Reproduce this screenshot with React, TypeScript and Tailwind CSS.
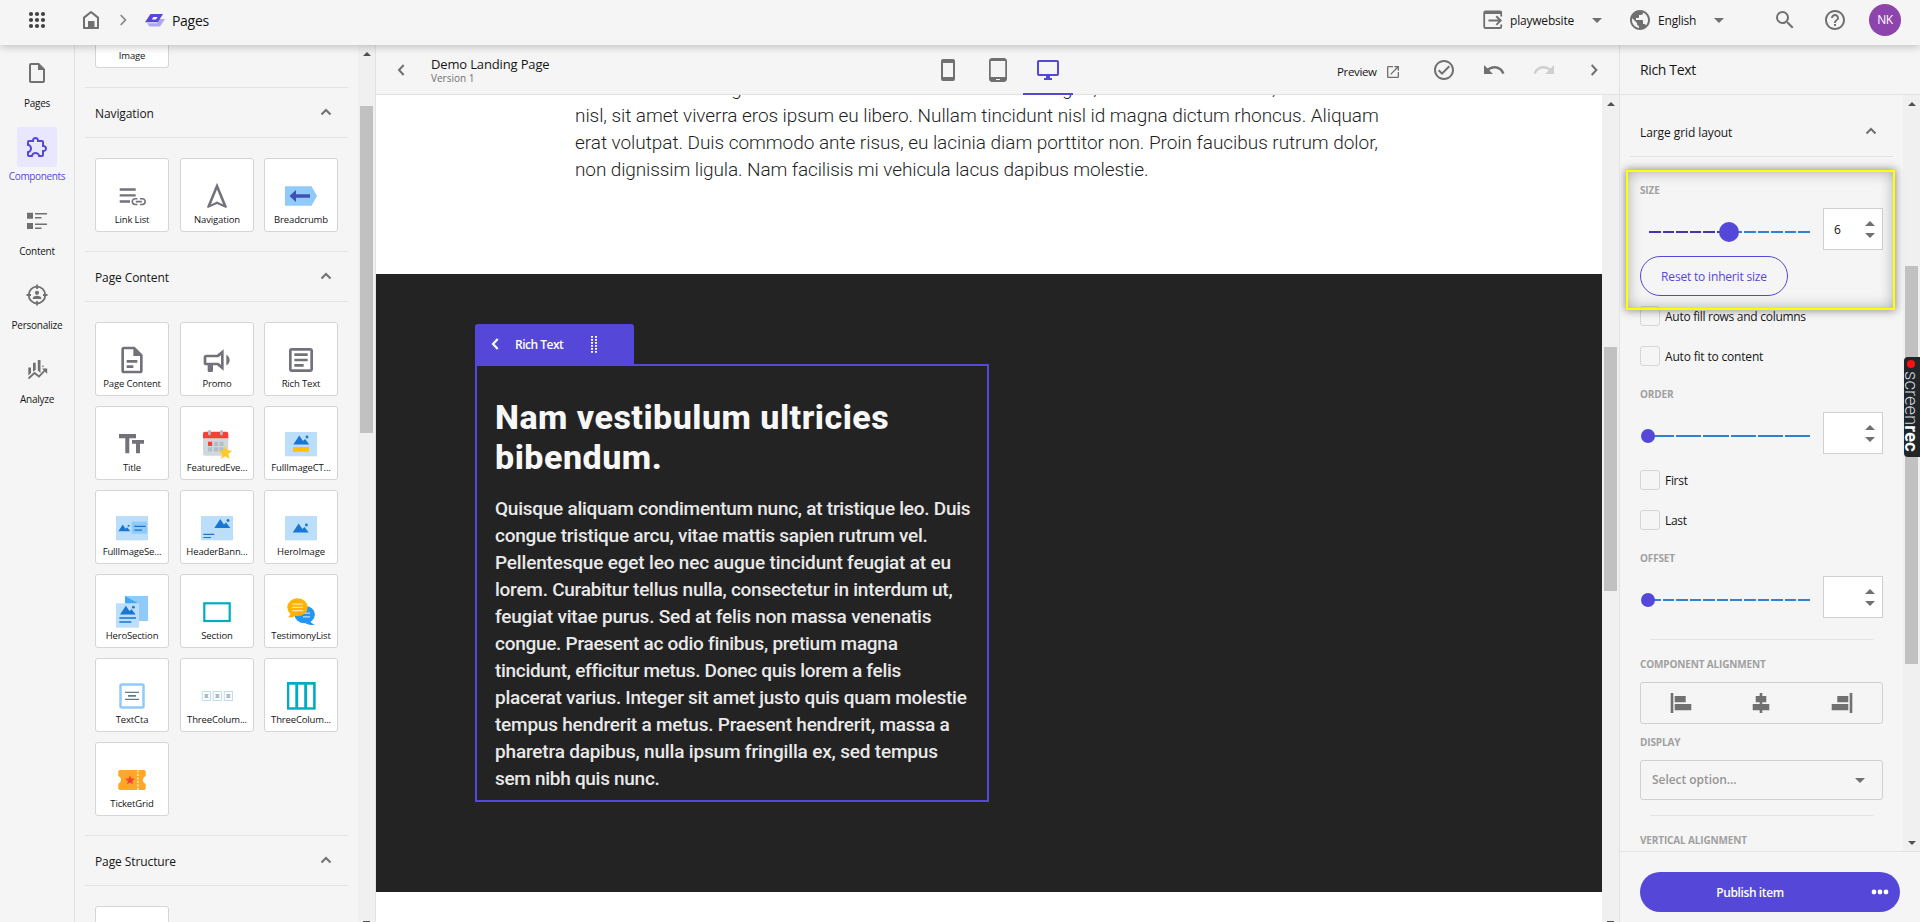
import React from "react";

const GRAY = "#707070";

/* ---------- Icons ---------- */

type PathIconProps = { d: string; size?: number; color?: string };

function PathIcon({ d, size = 24, color = GRAY }: PathIconProps) {
  return (
    <svg width={size} height={size} viewBox="0 0 24 24" fill={color} className="block shrink-0">
      <path d={d} />
    </svg>
  );
}

const paths = {
  file: "M14,2H6A2,2 0 0,0 4,4V20A2,2 0 0,0 6,22H18A2,2 0 0,0 20,20V8L14,2M18,20H6V4H13V9H18V20Z",
  puzzle:
    "M22,13.5C22,15.26 20.7,16.72 19,16.96V20A2,2 0 0,1 17,22H13.2V21.7A2.7,2.7 0 0,0 10.5,19C9,19 7.8,20.21 7.8,21.7V22H4A2,2 0 0,1 2,20V16.2H2.3C3.79,16.2 5,15 5,13.5C5,12 3.79,10.8 2.3,10.8H2V7A2,2 0 0,1 4,5H7.04C7.28,3.3 8.74,2 10.5,2C12.26,2 13.72,3.3 13.96,5H17A2,2 0 0,1 19,7V10.04C20.7,10.28 22,11.74 22,13.5M17,15H18.5A1.5,1.5 0 0,0 20,13.5A1.5,1.5 0 0,0 18.5,12H17V7H12V5.5A1.5,1.5 0 0,0 10.5,4A1.5,1.5 0 0,0 9,5.5V7H4V9.12C5.76,9.8 7,11.5 7,13.5C7,15.5 5.75,17.2 4,17.88V20H6.12C6.8,18.25 8.5,17 10.5,17C12.5,17 14.2,18.25 14.88,20H17V15Z",
  doc: "M6,2A2,2 0 0,0 4,4V20A2,2 0 0,0 6,22H18A2,2 0 0,0 20,20V8L14,2H6M6,4H13V9H18V20H6V4M8,12V14H16V12H8M8,16V18H13V16H8Z",
  bullhorn:
    "M12,8H4A2,2 0 0,0 2,10V14A2,2 0 0,0 4,16H5V20A1,1 0 0,0 6,21H8A1,1 0 0,0 9,20V16H12L17,20V4L12,8M15,15.6L13,14H4V10H13L15,8.4V15.6M21.5,12C21.5,13.71 20.54,15.26 19,16V8C20.53,8.75 21.5,10.3 21.5,12Z",
  textBox:
    "M5,3C3.89,3 3,3.89 3,5V19C3,20.11 3.89,21 5,21H19C20.11,21 21,20.11 21,19V5C21,3.89 20.11,3 19,3H5M5,5H19V19H5V5M7,7V9H17V7H7M7,11V13H17V11H7M7,15V17H14V15H7Z",
  checkCircle:
    "M12 2C6.5 2 2 6.5 2 12S6.5 22 12 22 22 17.5 22 12 17.5 2 12 2M12 20C7.59 20 4 16.41 4 12S7.59 4 12 4 20 7.59 20 12 16.41 20 12 20M16.59 7.58L10 14.17L7.41 11.59L6 13L10 17L18 9L16.59 7.58Z",
  undo: "M12.5,8C9.85,8 7.45,9 5.6,10.6L2,7V16H11L7.38,12.38C8.77,11.22 10.54,10.5 12.5,10.5C16.04,10.5 19.05,12.81 20.1,16L22.47,15.22C21.08,11.03 17.15,8 12.5,8Z",
  redo: "M18.4,10.6C16.55,9 14.15,8 11.5,8C6.85,8 2.92,11.03 1.54,15.22L3.9,16C4.95,12.81 7.95,10.5 11.5,10.5C13.45,10.5 15.23,11.22 16.62,12.38L13,16H22V7L18.4,10.6Z",
  openInNew:
    "M14,3V5H17.59L7.76,14.83L9.17,16.24L19,6.41V10H21V3M19,19H5V5H12V3H5C3.89,3 3,3.9 3,5V19A2,2 0 0,0 5,21H19A2,2 0 0,0 21,19V12H19V19Z",
  monitor:
    "M21,16H3V4H21M21,2H3C1.89,2 1,2.89 1,4V16A2,2 0 0,0 3,18H10V20H8V22H16V20H14V18H21A2,2 0 0,0 23,16V4C23,2.89 22.1,2 21,2Z",
  phone: "M17,19H7V5H17M17,1H7C5.89,1 5,1.89 5,3V21A2,2 0 0,0 7,23H17A2,2 0 0,0 19,21V3C19,1.89 18.1,1 17,1Z",
  tablet:
    "M18 0H6C4.34 0 3 1.34 3 3v18c0 1.66 1.34 3 3 3h12c1.66 0 3-1.34 3-3V3c0-1.66-1.34-3-3-3zm-4 22h-4v-1h4v1zm5.25-3H4.75V3h14.5v16z",
  magnify:
    "M9.5,3A6.5,6.5 0 0,1 16,9.5C16,11.11 15.41,12.59 14.44,13.73L14.71,14H15.5L20.5,19L19,20.5L14,15.5V14.71L13.73,14.44C12.59,15.41 11.11,16 9.5,16A6.5,6.5 0 0,1 3,9.5A6.5,6.5 0 0,1 9.5,3M9.5,5C7,5 5,7 5,9.5C5,12 7,14 9.5,14C12,14 14,12 14,9.5C14,7 12,5 9.5,5Z",
  help: "M11 18h2v-2h-2v2zm1-16C6.48 2 2 6.48 2 12s4.48 10 10 10 10-4.48 10-10S17.52 2 12 2zm0 18c-4.41 0-8-3.59-8-8s3.59-8 8-8 8 3.59 8 8-3.59 8-8 8zm0-14c-2.21 0-4 1.79-4 4h2c0-1.1.9-2 2-2s2 .9 2 2c0 2-3 1.75-3 5h2c0-2.25 3-2.5 3-5 0-2.21-1.79-4-4-4z",
  globe:
    "M12 2C6.48 2 2 6.48 2 12s4.48 10 10 10 10-4.48 10-10S17.52 2 12 2zm-1 17.93c-3.95-.49-7-3.85-7-7.93 0-.62.08-1.21.21-1.79L9 15v1c0 1.1.9 2 2 2v1.93zm6.9-2.54c-.26-.81-1-1.39-1.9-1.39h-1v-3c0-.55-.45-1-1-1H8v-2h2c.55 0 1-.45 1-1V7h2c1.1 0 2-.9 2-2v-.41c2.93 1.19 5 4.06 5 7.41 0 2.08-.8 3.97-2.1 5.39z",
  navigation: "M12 2 4.5 20.29l.71.71L12 18l6.79 3 .71-.71L12 2zm0 5.2 4.6 11.2L12 16.1 7.4 18.4 12 7.2z",
};

const chevrons = {
  up: "M1.5 7.5 6 3l4.5 4.5",
  left: "M7.7 1 3 6l4.7 5",
  right: "M3.7 1l4.7 5-4.7 5",
};

function Chevron({ dir, color = GRAY, width = 2 }: { dir: keyof typeof chevrons; color?: string; width?: number }) {
  return (
    <svg width="12" height="12" viewBox="0 0 12 12" fill="none" stroke={color} strokeWidth={width} className="block shrink-0">
      <path d={chevrons[dir]} />
    </svg>
  );
}

function Caret({ up = false, color = GRAY }: { up?: boolean; color?: string }) {
  return (
    <svg width="10" height="5" viewBox="0 0 10 5" fill={color} className="block shrink-0">
      <path d={up ? "M0 5 5 0l5 5z" : "M0 0h10L5 5z"} />
    </svg>
  );
}

function AppsIcon() {
  const at = [6, 12, 18];
  return (
    <svg width="24" height="24" viewBox="0 0 24 24" fill="#424242" className="block shrink-0">
      {at.flatMap((y) => at.map((x) => <circle key={`${x}-${y}`} cx={x} cy={y} r="2.1" />))}
    </svg>
  );
}

function HomeIcon() {
  return (
    <svg width="24" height="24" viewBox="0 0 24 24" fill="none" className="block shrink-0">
      <path d="M5 9.6 12 4l7 5.6V20H5z" stroke={GRAY} strokeWidth="2" strokeLinejoin="round" />
      <path d="M9 13h6.5v7H9z" fill={GRAY} />
    </svg>
  );
}

function PagesLogo() {
  return (
    <svg width="20" height="13" viewBox="0 0 20 13" className="block shrink-0">
      <path d="M14.5 5H20l-5 7.4H4.5L1.8 9.2H12z" fill="#afa8ee" />
      <path fillRule="evenodd" d="M5.5 0H18l-5.2 8.3H0zM8.4 3 6.8 5.4h4.2L12.6 3z" fill="#5548d9" />
    </svg>
  );
}

function SiteIcon() {
  return (
    <svg width="24" height="24" viewBox="0 0 24 24" fill="none" className="block shrink-0">
      <path d="M20.200 8.500V4.800A1.300 1.300 0 0 0 18.900 3.500H4.500A1.300 1.300 0 0 0 3.200 4.800V18.700A1.300 1.300 0 0 0 4.500 20H18.900A1.300 1.300 0 0 0 20.200 18.700V16.500" stroke={GRAY} strokeWidth="1.800" />
      <path d="M3 3h17.500v3H3z" fill={GRAY} />
      <path d="M7.500 12.600H19.500M15.300 8.300 19.600 12.600l-4.300 4.300" stroke={GRAY} strokeWidth="2" />
    </svg>
  );
}

function ContentIcon() {
  return (
    <svg width="24" height="24" viewBox="0 0 24 24" fill={GRAY} className="block shrink-0">
      <path d="M2 3.700h6v6H2zM2 14h6v6H2zM10 4h12v1.600H10zM10 8h6.500v1.600H10zM10 14.400h12V16H10zM10 18.400h6.500V20H10z" />
    </svg>
  );
}

function PersonalizeIcon() {
  return (
    <svg width="24" height="24" viewBox="0 0 24 24" fill={GRAY} className="block shrink-0">
      <circle cx="12" cy="12" r="8.300" fill="none" stroke={GRAY} strokeWidth="1.800" />
      <path d="M11.100 1.500h1.800V6h-1.800zM11.100 18h1.800v4.500h-1.800zM1.500 11.100H6v1.800H1.500zM18 11.100h4.500v1.800H18z" />
      <circle cx="12" cy="9.800" r="2.100" />
      <path d="M7.800 16v-.9c0-1.500 2.600-2.300 4.200-2.300s4.200.8 4.200 2.300v.9z" />
    </svg>
  );
}

function AnalyzeIcon() {
  return (
    <svg width="24" height="24" viewBox="0 0 24 24" fill={GRAY} className="block shrink-0">
      <path d="M3.300 10.500H6V16L3.300 18.500zM8 5.800h2.700V13L8 14.500zM12.800 3h2.700v13l-2.700-2.500zM17.300 8.500H18.500v1.500h-1.200z" />
      <path d="M3.500 21.500l6-5.500 4.500 3.500 7-7.300" fill="none" stroke={GRAY} strokeWidth="1.800" />
      <path d="M17 11.500h5.200V17z" />
    </svg>
  );
}

/* ---------- Component tile drawings ---------- */

const INK = "#73727b";

function Art({ children }: { children: React.ReactNode }) {
  return (
    <svg width="32" height="32" viewBox="0 0 32 32" className="block shrink-0">
      {children}
    </svg>
  );
}

/* Mountain silhouette, 16 wide and 9 high, with a sun at its upper right. */
function Mountain({ x, y, s = 1 }: { x: number; y: number; s?: number }) {
  return (
    <g transform={`translate(${x} ${y}) scale(${s})`} fill="#1976d2">
      <path d="M0 9 6 0l3.600 5.400L11.800 3.600 16 9z" />
      <circle cx="13.700" cy="1.500" r="1.400" />
    </g>
  );
}

function starPoints(cx: number, cy: number, r: number) {
  return Array.from({ length: 10 }, (_, i) => {
    const radius = i % 2 ? r * 0.45 : r;
    const a = (Math.PI / 5) * i - Math.PI / 2;
    return `${(cx + radius * Math.cos(a)).toFixed(2)},${(cy + radius * Math.sin(a)).toFixed(2)}`;
  }).join(" ");
}

const art = {
  linkList: (
    <Art>
      <path d="M3.700 8.300h16v2.400h-16zM3.700 14.200h16v2.400h-16zM3.700 20.200h10.300v2.600H3.700z" fill={INK} />
      <path d="M21.500 18.700h-2.300a2.900 2.900 0 0 0 0 5.800h2.300M24 18.700h2.300a2.900 2.900 0 0 1 0 5.800H24M19.800 21.600h6" fill="none" stroke={INK} strokeWidth="1.600" />
    </Art>
  ),
  navigation: <PathIcon d={paths.navigation} size={32} color={INK} />,
  breadcrumb: (
    <Art>
      <path d="M0 6.300h26.500l5.500 9.800-5.500 9.700H0z" fill="#90caf9" />
      <path d="M4.500 16l6.500-6v4.200h14v3.600H11V22z" fill="#3f51b5" />
    </Art>
  ),
  pageContent: <PathIcon d={paths.doc} size={32} color={INK} />,
  promo: <PathIcon d={paths.bullhorn} size={32} color={INK} />,
  richText: <PathIcon d={paths.textBox} size={32} color={INK} />,
  title: (
    <Art>
      <path d="M3 6h17v4.300h-6.700v15H9.300v-15H3zM16 12h12v3.800h-4v9.500h-4v-9.500h-4z" fill={INK} />
    </Art>
  ),
  featuredEvents: (
    <Art>
      <path d="M2 9h25.300v16.700a2 2 0 0 1-2 2H4a2 2 0 0 1-2-2z" fill="#cfd8dc" />
      <path d="M2 10.300V5.700a2 2 0 0 1 2-2h21.300a2 2 0 0 1 2 2v4.600z" fill="#f44336" />
      <rect x="7" y="2" width="2.900" height="5.500" rx="1.400" fill="#b0bec5" />
      <rect x="19" y="2" width="2.900" height="5.500" rx="1.400" fill="#b0bec5" />
      <path d="M7 13.700h4.200V18H7z" fill="#f44336" />
      <path d="M13 13.700h4.200V18H13zM18.500 13.700h4V18h-4zM7 19.300h4.200v4.200H7zM13 19.300h4.200v4.200H13zM18.500 19.300h4v4.200h-4z" fill="#b0bec5" />
      <polygon points={starPoints(24.300, 25, 7.300)} fill="#ffca28" />
    </Art>
  ),
  fullImageCta: (
    <Art>
      <path d="M0 4h32v24.300H0z" fill="#bbdefb" />
      <Mountain x={8.300} y={7.500} />
      <path d="M8 19h16v4.800H8z" fill="#ffc107" />
    </Art>
  ),
  fullImageSection: (
    <Art>
      <path d="M0 4h32v24.300H0z" fill="#bbdefb" />
      <path d="M15.700 9.700H31v12H15.700z" fill="#90caf9" />
      <Mountain x={2.300} y={12.600} s={0.750} />
      <path d="M18.300 13.700h11.400v1.400H18.300zM18.300 17.400H26v1.400h-7.700z" fill="#1976d2" />
    </Art>
  ),
  headerBanner: (
    <Art>
      <path d="M0 4h32v24.300H0z" fill="#bbdefb" />
      <Mountain x={13.300} y={7} />
      <path d="M2.300 21.800h11v1.200h-11zM2.300 24.900H10V26H2.300z" fill="#1976d2" />
    </Art>
  ),
  heroImage: (
    <Art>
      <path d="M0 4h32v24.300H0z" fill="#bbdefb" />
      <Mountain x={7.700} y={11.500} />
    </Art>
  ),
  heroSection: (
    <Art>
      <path d="M9 0h23v25H9z" fill="#90caf9" />
      <path d="M9 0l13.500 7.500H9z" fill="#42a5f5" />
      <path d="M0 7.300h23V31.700H0z" fill="#bbdefb" />
      <Mountain x={4} y={9.700} s={0.980} />
      <path d="M3.300 21.300H20v1.500H3.300zM3.300 25.300h12v1.500h-12z" fill="#1976d2" />
    </Art>
  ),
  section: (
    <Art>
      <rect x="3.300" y="7.300" width="25.400" height="17.700" fill="#fff" stroke="#00acc1" strokeWidth="2.200" />
    </Art>
  ),
  testimony: (
    <Art>
      <ellipse cx="19.700" cy="18.500" rx="10.200" ry="8.800" fill="#2196f3" />
      <path d="M28.500 22l-3 4 4 3c-3.500.3-7-.3-9-2z" fill="#2196f3" />
      <path d="M18 20.300h7v1.200h-7zM18 16.500h7v1.200h-7z" fill="#bbdefb" />
      <ellipse cx="12.500" cy="11.200" rx="10.200" ry="8.900" fill="#ffb300" />
      <path d="M4 15.500l1.500 3-2.500 2.800c3 .2 6-.3 8-1.500z" fill="#ffb300" />
      <path d="M7.300 7.500h10.700v1.300H7.300zM7.300 10.700h10.700V12H7.300zM7.300 14h10.700v1.300H7.300z" fill="#ffe8b0" />
    </Art>
  ),
  textCta: (
    <Art>
      <rect x="4.500" y="4.500" width="23" height="23" rx="1.500" fill="#fff" stroke="#90caf9" strokeWidth="2.500" />
      <path d="M9 11.700h14v1.300H9zM12 15.100h8v1.600h-8zM9 18.800h14v1.300H9z" fill="#607d8b" />
    </Art>
  ),
  threeColumnCta: (
    <Art>
      {[1.200, 12.200, 23.200].map((x) => (
        <g key={x}>
          <rect x={x} y="11.500" width="8.300" height="9" fill="#fff" stroke="#bbdefb" />
          <path d={`M${x + 1.800} 14h4.700l-1 2 1 2h-4.700l1-2z`} fill="#b0b8bc" />
        </g>
      ))}
    </Art>
  ),
  threeColumn: (
    <Art>
      <path d="M2 2h28.700v27.700H2z" fill="#00acc1" />
      <path d="M4.300 4.700h6v22.600h-6zM13.200 4.700h6v22.600h-6zM22.100 4.700h6v22.600h-6z" fill="#fff" />
    </Art>
  ),
  ticket: (
    <Art>
      <path d="M4 6h24a1.700 1.700 0 0 1 1.700 1.700v4.500a4 4 0 0 0 0 7.600v4.500A1.700 1.700 0 0 1 28 26H4a1.700 1.700 0 0 1-1.700-1.700v-4.500a4 4 0 0 0 0-7.600V7.700A1.700 1.700 0 0 1 4 6z" fill="#ffa726" />
      <path d="M21.900 6.500v20" stroke="#fff3d6" strokeWidth="1.500" strokeDasharray="2 1.500" />
      <polygon points={starPoints(14, 16.200, 5)} fill="#f44336" />
    </Art>
  ),
};

type TileData = { label: string; icon: React.ReactNode };

const navigationTiles: TileData[] = [
  { label: "Link List", icon: art.linkList },
  { label: "Navigation", icon: art.navigation },
  { label: "Breadcrumb", icon: art.breadcrumb },
];

const pageContentTiles: TileData[] = [
  { label: "Page Content", icon: art.pageContent },
  { label: "Promo", icon: art.promo },
  { label: "Rich Text", icon: art.richText },
  { label: "Title", icon: art.title },
  { label: "FeaturedEve...", icon: art.featuredEvents },
  { label: "FullImageCT...", icon: art.fullImageCta },
  { label: "FullImageSe...", icon: art.fullImageSection },
  { label: "HeaderBann...", icon: art.headerBanner },
  { label: "HeroImage", icon: art.heroImage },
  { label: "HeroSection", icon: art.heroSection },
  { label: "Section", icon: art.section },
  { label: "TestimonyList", icon: art.testimony },
  { label: "TextCta", icon: art.textCta },
  { label: "ThreeColum...", icon: art.threeColumnCta },
  { label: "ThreeColum...", icon: art.threeColumn },
  { label: "TicketGrid", icon: art.ticket },
];

/* ---------- Header ---------- */

function Header() {
  return (
    <header className="relative z-20 flex h-[45px] shrink-0 items-start bg-[#f5f5f5] shadow-[0_2px_8px_rgba(0,0,0,0.22)]">
      <div className="flex h-10 items-center pl-[25px]">
        <AppsIcon />
        <div className="ml-[30px]"><HomeIcon /></div>
        <div className="ml-[14px]"><Chevron dir="right" color="#8a8a8a" width={1.8} /></div>
        <div className="ml-4"><PagesLogo /></div>
        <span className="ml-[7px] pt-px text-[14px] leading-5 font-medium tracking-[-0.3px]">Pages</span>
      </div>
      <div className="ml-auto flex h-10 w-[439px] items-center">
        <SiteIcon />
        <span className="ml-[5px] w-[82px] pt-[2px] text-[12px] font-medium tracking-[-0.2px]">playwebsite</span>
        <Caret />
        <div className="ml-[26px]"><PathIcon d={paths.globe} /></div>
        <span className="ml-[6px] w-[56px] pt-[2px] text-[12px] font-medium tracking-[-0.2px]">English</span>
        <Caret />
        <div className="ml-[49px]"><PathIcon d={paths.magnify} /></div>
        <div className="ml-[26px]"><PathIcon d={paths.help} /></div>
        <div className="ml-[22px] flex h-8 w-8 items-center justify-center rounded-full bg-[#8e44ad] text-[12px] text-white tracking-[-0.5px]">NK</div>
      </div>
    </header>
  );
}

/* ---------- Left rail and component panel ---------- */

function Rail() {
  const items = [
    { label: "Pages", icon: <PathIcon d={paths.file} /> },
    { label: "Components", icon: <PathIcon d={paths.puzzle} color="#5548d9" />, active: true },
    { label: "Content", icon: <ContentIcon /> },
    { label: "Personalize", icon: <PersonalizeIcon /> },
    { label: "Analyze", icon: <AnalyzeIcon /> },
  ];
  return (
    <nav className="flex w-[75px] shrink-0 flex-col border-r border-[#e2e2e2] pt-2">
      {items.map((it) => (
        <div key={it.label} className="flex h-[74px] flex-col items-center">
          <div className={it.active ? "flex h-10 w-10 shrink-0 items-center justify-center rounded-[3px] bg-[#e9e6ff]" : "flex h-10 w-10 shrink-0 items-center justify-center"}>
            {it.icon}
          </div>
          <span className={it.active ? "mt-px text-[10px] leading-4 font-medium tracking-[-0.35px] text-[#5548d9]" : "mt-[2px] text-[10px] leading-4 font-medium tracking-[-0.25px]"}>
            {it.label}
          </span>
        </div>
      ))}
    </nav>
  );
}

function Tile({ label, icon }: TileData) {
  return (
    <div className="flex h-[74px] w-[74px] flex-col items-center rounded-[3px] border border-[#d5d5d5] bg-white pt-[21px]">
      {icon}
      <span className="mt-px text-[9.5px] leading-[14px] tracking-[-0.15px] whitespace-nowrap">{label}</span>
    </div>
  );
}

function Section({ title, tiles }: { title: string; tiles: TileData[] }) {
  return (
    <section className="border-t border-[#e2e2e2]">
      <div className="flex h-[50px] items-center justify-between border-b border-[#e2e2e2] pr-4 pl-[10px]">
        <h2 className="pt-[2px] text-[12px] font-medium tracking-[-0.1px]">{title}</h2>
        <Chevron dir="up" />
      </div>
      <div className="grid grid-cols-[85px_84px_74px] gap-y-[10px] px-[10px] pt-5 pb-[19px]">
        {tiles.map((t, i) => (
          <Tile key={i} {...t} />
        ))}
      </div>
    </section>
  );
}

function ComponentPanel() {
  return (
    <aside className="flex w-[301px] shrink-0 overflow-hidden border-r border-[#e2e2e2]">
      <div className="-mt-[51px] w-[273px] shrink-0 pl-[10px]">
        <div className="grid grid-cols-[85px_84px_74px] px-[10px] pb-[19px]">
          <Tile label="Image" icon={<Art>{null}</Art>} />
        </div>
        <Section title="Navigation" tiles={navigationTiles} />
        <Section title="Page Content" tiles={pageContentTiles} />
        <Section title="Page Structure" tiles={[{ label: "", icon: null }]} />
      </div>
      <div className="ml-[10px] flex w-[17px] flex-col items-center bg-[#f0f0f0] pt-[7px]">
        <ScrollArrow />
        <div className="mt-[50px] h-[327px] w-[13px] bg-[#c1c1c1]" />
        <div className="mt-auto h-px w-[7px] bg-[#505050]" />
      </div>
    </aside>
  );
}

function ScrollArrow({ down = false }: { down?: boolean }) {
  return (
    <svg width="8" height="4" viewBox="0 0 8 4" fill="#505050" className="block shrink-0">
      <path d={down ? "M0 0h8L4 4z" : "M0 4l4-4 4 4z"} />
    </svg>
  );
}

/* ---------- Editor ---------- */

function Toolbar() {
  return (
    <div className="flex h-[50px] shrink-0 border-b border-[#e2e2e2] bg-[#f5f5f5]">
      <div className="flex w-[547px] items-center pl-5">
        <Chevron dir="left" />
        <div className="ml-[23px] pt-px">
          <div className="text-[13px] leading-4 font-medium tracking-[-0.15px]">Demo Landing Page</div>
          <div className="text-[10px] leading-[13px] text-[#717171]">Version 1</div>
        </div>
      </div>
      <div className="flex items-center">
        <div className="flex h-[50px] w-[50px] items-center justify-center"><PathIcon d={paths.phone} /></div>
        <div className="flex h-[50px] w-[50px] items-center justify-center"><PathIcon d={paths.tablet} /></div>
        <div className="flex h-[50px] w-[50px] items-center justify-center border-b-2 border-[#5548d9] pt-[2px]"><PathIcon d={paths.monitor} color="#5548d9" /></div>
      </div>
      <div className="ml-auto flex w-[282px] items-center">
        <span className="w-[48px] pt-1 text-[11.5px] leading-4 font-medium tracking-[-0.35px]">Preview</span>
        <div className="pt-1"><PathIcon d={paths.openInNew} size={16} /></div>
        <div className="ml-[31px]"><PathIcon d={paths.checkCircle} /></div>
        <div className="ml-[26px]"><PathIcon d={paths.undo} /></div>
        <div className="ml-[26px]"><PathIcon d={paths.redo} color="#cfcfcf" /></div>
        <div className="ml-[32px]"><Chevron dir="right" /></div>
      </div>
    </div>
  );
}

const introLines = [
  { text: "Aenean dictum feugiat ut enim vel urnas. Donec a vitae magna, sed rutrum nisi dolor, leo", track: "tracking-normal" },
  { text: "nisl, sit amet viverra eros ipsum eu libero. Nullam tincidunt nisl id magna dictum rhoncus. Aliquam", track: "tracking-[-0.07px]" },
  { text: "erat volutpat. Duis commodo ante risus, eu lacinia diam porttitor non. Proin faucibus rutrum dolor,", track: "tracking-[-0.05px]" },
  { text: "non dignissim ligula. Nam facilisis mi vehicula lacus dapibus molestie.", track: "tracking-[-0.11px]" },
];

const bodyLines = [
  { text: "Quisque aliquam condimentum nunc, at tristique leo. Duis", track: "tracking-[-0.26px]" },
  { text: "congue tristique arcu, vitae mattis sapien rutrum vel.", track: "tracking-[-0.25px]" },
  { text: "Pellentesque eget leo nec augue tincidunt feugiat at eu", track: "tracking-[-0.18px]" },
  { text: "lorem. Curabitur tellus nulla, consectetur in interdum ut,", track: "tracking-[-0.25px]" },
  { text: "feugiat vitae purus. Sed at felis non massa venenatis", track: "tracking-[-0.21px]" },
  { text: "congue. Praesent ac odio finibus, pretium magna", track: "tracking-[-0.28px]" },
  { text: "tincidunt, efficitur metus. Donec quis lorem a felis", track: "tracking-[-0.32px]" },
  { text: "placerat varius. Integer sit amet justo quis quam molestie", track: "tracking-[-0.27px]" },
  { text: "tempus hendrerit a metus. Praesent hendrerit, massa a", track: "tracking-[-0.22px]" },
  { text: "pharetra dapibus, nulla ipsum fringilla ex, sed tempus", track: "tracking-[-0.18px]" },
  { text: "sem nibh quis nunc.", track: "tracking-[-0.3px]" },
];

function DragDots() {
  return (
    <svg width="6" height="18" viewBox="0 0 6 18" fill="#fff" className="block">
      {[0, 3, 6, 9, 12, 15].map((y) => (
        <path key={y} d={`M0 ${y + 1}h2v1.800H0zM4 ${y + 1}h2v1.800H4z`} />
      ))}
    </svg>
  );
}

function Canvas() {
  return (
    <div className="flex min-h-0 flex-1 overflow-hidden">
      <div className="w-[1226px] shrink-0 bg-white font-['Roboto',sans-serif]">
        <div className="-mt-5 pb-[91px] pl-[199px] text-[19px] leading-[27px] font-light whitespace-nowrap text-[#1f1f1f]">
          {introLines.map((l) => (
            <div key={l.text} className={l.track}>{l.text}</div>
          ))}
        </div>
        <div className="h-[618px] bg-[#232323] pt-[50px] pl-[99px]">
          <div className="flex h-10 w-[159px] items-center rounded-t-[3px] bg-[#5548d9] pl-[15px] font-['Open_Sans',sans-serif]">
            <Chevron dir="left" color="#fff" width={2.2} />
            <span className="ml-[13px] w-[76px] pt-px text-[12px] font-semibold tracking-[-0.5px] text-white">Rich Text</span>
            <DragDots />
          </div>
          <div className="h-[438px] w-[514px] border-2 border-[#5548d9] pt-[31px] pl-[18px] whitespace-nowrap">
            <h1 className="text-[34px] leading-10 font-extrabold text-[#f7f7f7]">
              <span className="block tracking-[0.48px]">Nam vestibulum ultricies</span>
              <span className="block tracking-[0.5px]">bibendum.</span>
            </h1>
            <div className="mt-[18px] text-[19px] leading-[27px] font-medium text-[#e9e9e9]">
              {bodyLines.map((l) => (
                <div key={l.text} className={l.track}>{l.text}</div>
              ))}
            </div>
          </div>
        </div>
      </div>
      <div className="flex w-[17px] flex-col items-center bg-[#f0f0f0] pt-[7px]">
        <ScrollArrow />
        <div className="mt-[241px] h-[244px] w-[13px] bg-[#c1c1c1]" />
        <div className="mt-auto h-px w-[7px] bg-[#505050]" />
      </div>
    </div>
  );
}

/* ---------- Properties panel ---------- */

function FieldLabel({ children }: { children: React.ReactNode }) {
  return <div className="h-[14px] text-[10px] leading-[15px] font-bold tracking-[-0.15px] text-[#a0a0a0]">{children}</div>;
}

function SliderField({ segments, filled = 0, value = "" }: { segments: number; filled?: number; value?: string }) {
  return (
    <div className="flex h-[42px] items-center">
      <div className="relative mt-[6px] ml-[9px] flex h-5 w-[161px] items-center gap-[2px]">
        {Array.from({ length: segments }, (_, i) => (
          <div key={i} className={i < filled ? "h-[2px] flex-1 bg-[#4335b0]" : "h-[2px] flex-1 bg-[#2f82d2]"} />
        ))}
        {filled > 0 ? (
          <div className="absolute top-0 left-[70px] h-5 w-5 rounded-full bg-[#5548d9]" />
        ) : (
          <div className="absolute top-[3px] -left-[8px] h-[14px] w-[14px] rounded-full bg-[#5548d9]" />
        )}
      </div>
      <div className="ml-[13px] flex h-[42px] w-[60px] items-center justify-between border border-[#d0d0d0] bg-white pr-[7px] pl-[10px]">
        <span className="pt-px text-[12px]">{value}</span>
        <div className="flex flex-col gap-[7px]">
          <Caret up />
          <Caret />
        </div>
      </div>
    </div>
  );
}

function CheckRow({ label, track }: { label: string; track: string }) {
  return (
    <div className="flex h-5 items-center">
      <div className="h-5 w-5 rounded-[3px] border border-[#d5d5d5]" />
      <span className={`ml-[5px] pt-[2px] text-[12px] leading-5 ${track}`}>{label}</span>
    </div>
  );
}

function AlignIcon({ kind }: { kind: "left" | "center" | "right" }) {
  const d = {
    left: "M1.700 2h2.600v20H1.700zM5.700 5h11v6.300h-11zM5.700 13h16.600v6.300H5.700z",
    center: "M10.700 2h2.600v20h-2.600zM6.700 5h10.600v6.300H6.700zM3.700 13h16.600v6.300H3.700z",
    right: "M19.700 2h2.600v20h-2.600zM7.300 5h11v6.300h-11zM1.700 13h16.600v6.300H1.700z",
  }[kind];
  return <PathIcon d={d} />;
}

function PropertiesPanel() {
  return (
    <aside className="flex w-[301px] shrink-0 flex-col border-l border-[#e2e2e2]">
      <div className="flex h-[50px] shrink-0 items-center border-b border-[#e2e2e2] pl-5 text-[14px] font-medium tracking-[-0.35px]">Rich Text</div>
      <div className="flex h-[756px] shrink-0 overflow-hidden">
        <div className="relative w-[283px] shrink-0">
          <div className="ml-[10px] flex h-[62px] w-[263px] items-end justify-between border-b border-[#e2e2e2] pr-4 pb-[13px] pl-[10px]">
            <h2 className="text-[12px] leading-5 font-medium tracking-[-0.08px]">Large grid layout</h2>
            <div className="pb-[5px]"><Chevron dir="up" /></div>
          </div>
          <div className="w-[263px] pt-[26px] pl-5">
            <FieldLabel>SIZE</FieldLabel>
            <div className="mt-[11px]"><SliderField segments={12} filled={6} value="6" /></div>
            <div className="mt-[6px] flex h-10 w-[148px] items-center justify-center rounded-full border border-[#5548d9] pt-px text-[12px] font-medium tracking-[-0.18px] text-[#5548d9]">
              Reset to inherit size
            </div>
            <div className="mt-[10px] flex flex-col gap-5">
              <CheckRow label="Auto fill rows and columns" track="tracking-[-0.28px]" />
              <CheckRow label="Auto fit to content" track="tracking-[-0.18px]" />
            </div>
            <div className="mt-[21px]"><FieldLabel>ORDER</FieldLabel></div>
            <div className="mt-[11px]"><SliderField segments={6} /></div>
            <div className="mt-4 flex flex-col gap-5">
              <CheckRow label="First" track="tracking-[-0.3px]" />
              <CheckRow label="Last" track="tracking-[-0.3px]" />
            </div>
            <div className="mt-[21px]"><FieldLabel>OFFSET</FieldLabel></div>
            <div className="mt-[11px]"><SliderField segments={12} /></div>
            <div className="mt-[21px] ml-[10px] h-px w-[223px] bg-[#e2e2e2]" />
            <div className="mt-[17px]"><FieldLabel>COMPONENT ALIGNMENT</FieldLabel></div>
            <div className="mt-[11px] grid h-[42px] grid-cols-3 place-items-center rounded-[3px] border border-[#d0d0d0]">
              <AlignIcon kind="left" />
              <AlignIcon kind="center" />
              <AlignIcon kind="right" />
            </div>
            <div className="mt-[11px]"><FieldLabel>DISPLAY</FieldLabel></div>
            <div className="mt-[11px] flex h-10 items-center justify-between rounded-[3px] border border-[#d0d0d0] pr-[17px] pl-[11px]">
              <span className="text-[12px] font-semibold tracking-[-0.05px] text-[#959595]">Select option...</span>
              <Caret />
            </div>
            <div className="mt-[15px] ml-[10px] h-px w-[223px] bg-[#e2e2e2]" />
            <div className="mt-[17px]"><FieldLabel>VERTICAL ALIGNMENT</FieldLabel></div>
          </div>
          <div className="pointer-events-none absolute top-[75px] left-[6px] h-[140px] w-[269px] border-2 border-[#ffff00] shadow-[0_0_8px_1px_rgba(0,0,0,0.4),inset_0_0_14px_rgba(0,0,0,0.3)]" />
        </div>
        <div className="flex w-[17px] flex-col items-center bg-[#f0f0f0] pt-[7px] pb-[6px]">
          <ScrollArrow />
          <div className="mt-[160px] h-[398px] w-[13px] bg-[#c1c1c1]" />
          <div className="mt-auto"><ScrollArrow down /></div>
        </div>
      </div>
      <div className="flex flex-1 justify-start border-t border-[#e2e2e2] pt-5 pl-5">
        <div className="flex h-10 w-[260px] items-center rounded-full bg-[#5548d9]">
          <span className="w-[220px] pt-px text-center text-[12px] font-semibold tracking-[-0.4px] text-white">Publish item</span>
          <svg width="18" height="6" viewBox="0 0 18 6" fill="#fff" className="ml-[11px] block">
            <circle cx="3" cy="3" r="2.400" />
            <circle cx="9" cy="3" r="2.400" />
            <circle cx="15" cy="3" r="2.400" />
          </svg>
        </div>
      </div>
    </aside>
  );
}

/* Recorder badge docked on the right edge of the window. */
function RecorderBadge() {
  return (
    <div className="absolute top-[357px] right-0 z-30 flex h-[100px] w-4 flex-col items-center rounded-l-[4px] bg-[#20262a] pt-[3px]">
      <div className="mr-[2px] h-2 w-2 shrink-0 rounded-full bg-[#ff1010]" />
      <div className="mt-[3px] mr-[3px] font-['Roboto',sans-serif] text-[18.500px] leading-4 whitespace-nowrap text-[#d8dadb] [writing-mode:vertical-rl]">
        <span className="font-light">screen</span>
        <span className="font-bold text-white">rec</span>
      </div>
    </div>
  );
}

export default function App() {
  return (
    <div className="relative flex h-screen flex-col overflow-hidden bg-[#f5f5f5] font-['Open_Sans',sans-serif] text-[#151515]">
      <Header />
      <div className="flex min-h-0 flex-1">
        <Rail />
        <ComponentPanel />
        <main className="flex min-w-0 flex-1 flex-col">
          <Toolbar />
          <Canvas />
        </main>
        <PropertiesPanel />
      </div>
      <RecorderBadge />
    </div>
  );
}
